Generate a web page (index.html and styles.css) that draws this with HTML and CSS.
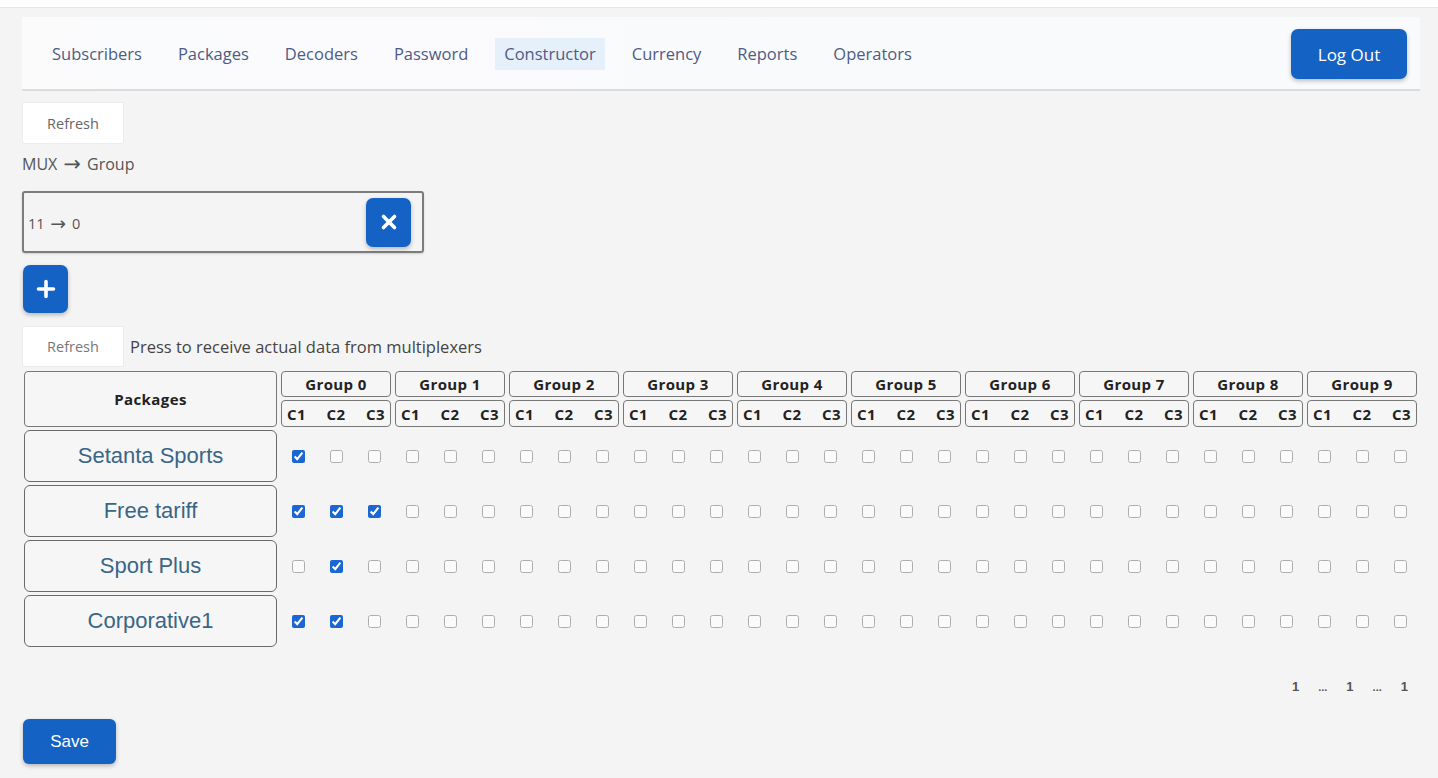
FILE: index.html
```html
<!DOCTYPE html>
<html lang="en">
<head>
<meta charset="utf-8">
<title>Constructor</title>
<link rel="stylesheet" href="styles.css">
</head>
<body>
<div class="topline"></div>
<div class="page">
  <nav class="navbar">
    <ul class="nav-links">
      <li><a class="nav-link" href="#">Subscribers</a></li>
      <li><a class="nav-link" href="#">Packages</a></li>
      <li><a class="nav-link" href="#">Decoders</a></li>
      <li><a class="nav-link" href="#">Password</a></li>
      <li><a class="nav-link active" href="#">Constructor</a></li>
      <li><a class="nav-link" href="#">Currency</a></li>
      <li><a class="nav-link" href="#">Reports</a></li>
      <li><a class="nav-link" href="#">Operators</a></li>
    </ul>
    <button class="btn-primary btn-logout">Log Out</button>
  </nav>

  <section class="mux">
    <button class="btn-light btn-refresh">Refresh</button>
    <div class="mux-title">MUX <span class="arrow">&rarr;</span> Group</div>
    <div class="mux-item">
      <span class="mux-value">11 <span class="arrow">&rarr;</span> 0</span>
      <button class="btn-primary btn-icon" aria-label="Remove">
        <svg width="18" height="18" viewBox="0 0 18 18"><path d="M3.5 3.5 L14.5 14.5 M14.5 3.5 L3.5 14.5" stroke="#fff" stroke-width="3.6" stroke-linecap="round"/></svg>
      </button>
    </div>
    <button class="btn-primary btn-icon btn-add" aria-label="Add">
      <svg width="20" height="20" viewBox="0 0 20 20"><path d="M10 2.5 V17.5 M2.5 10 H17.5" stroke="#fff" stroke-width="3.6" stroke-linecap="round"/></svg>
    </button>
  </section>

  <div class="refresh-row">
    <button class="btn-light btn-refresh small">Refresh</button>
    <span class="hint">Press to receive actual data from multiplexers</span>
  </div>

  <div class="matrix">
    <div class="cell head packages-head">Packages</div>
    <div class="cell head group">Group 0</div>
    <div class="cell head group">Group 1</div>
    <div class="cell head group">Group 2</div>
    <div class="cell head group">Group 3</div>
    <div class="cell head group">Group 4</div>
    <div class="cell head group">Group 5</div>
    <div class="cell head group">Group 6</div>
    <div class="cell head group">Group 7</div>
    <div class="cell head group">Group 8</div>
    <div class="cell head group">Group 9</div>
    <div class="cell head chans"><span>C1</span><span>C2</span><span>C3</span></div>
    <div class="cell head chans"><span>C1</span><span>C2</span><span>C3</span></div>
    <div class="cell head chans"><span>C1</span><span>C2</span><span>C3</span></div>
    <div class="cell head chans"><span>C1</span><span>C2</span><span>C3</span></div>
    <div class="cell head chans"><span>C1</span><span>C2</span><span>C3</span></div>
    <div class="cell head chans"><span>C1</span><span>C2</span><span>C3</span></div>
    <div class="cell head chans"><span>C1</span><span>C2</span><span>C3</span></div>
    <div class="cell head chans"><span>C1</span><span>C2</span><span>C3</span></div>
    <div class="cell head chans"><span>C1</span><span>C2</span><span>C3</span></div>
    <div class="cell head chans"><span>C1</span><span>C2</span><span>C3</span></div>

    <!-- Setanta Sports -->
    <div class="cell package">Setanta Sports</div>
    <div class="checks"><input type="checkbox" checked><input type="checkbox"><input type="checkbox"></div>
    <div class="checks"><input type="checkbox"><input type="checkbox"><input type="checkbox"></div>
    <div class="checks"><input type="checkbox"><input type="checkbox"><input type="checkbox"></div>
    <div class="checks"><input type="checkbox"><input type="checkbox"><input type="checkbox"></div>
    <div class="checks"><input type="checkbox"><input type="checkbox"><input type="checkbox"></div>
    <div class="checks"><input type="checkbox"><input type="checkbox"><input type="checkbox"></div>
    <div class="checks"><input type="checkbox"><input type="checkbox"><input type="checkbox"></div>
    <div class="checks"><input type="checkbox"><input type="checkbox"><input type="checkbox"></div>
    <div class="checks"><input type="checkbox"><input type="checkbox"><input type="checkbox"></div>
    <div class="checks"><input type="checkbox"><input type="checkbox"><input type="checkbox"></div>

    <!-- Free tariff -->
    <div class="cell package">Free tariff</div>
    <div class="checks"><input type="checkbox" checked><input type="checkbox" checked><input type="checkbox" checked></div>
    <div class="checks"><input type="checkbox"><input type="checkbox"><input type="checkbox"></div>
    <div class="checks"><input type="checkbox"><input type="checkbox"><input type="checkbox"></div>
    <div class="checks"><input type="checkbox"><input type="checkbox"><input type="checkbox"></div>
    <div class="checks"><input type="checkbox"><input type="checkbox"><input type="checkbox"></div>
    <div class="checks"><input type="checkbox"><input type="checkbox"><input type="checkbox"></div>
    <div class="checks"><input type="checkbox"><input type="checkbox"><input type="checkbox"></div>
    <div class="checks"><input type="checkbox"><input type="checkbox"><input type="checkbox"></div>
    <div class="checks"><input type="checkbox"><input type="checkbox"><input type="checkbox"></div>
    <div class="checks"><input type="checkbox"><input type="checkbox"><input type="checkbox"></div>

    <!-- Sport Plus -->
    <div class="cell package">Sport Plus</div>
    <div class="checks"><input type="checkbox"><input type="checkbox" checked><input type="checkbox"></div>
    <div class="checks"><input type="checkbox"><input type="checkbox"><input type="checkbox"></div>
    <div class="checks"><input type="checkbox"><input type="checkbox"><input type="checkbox"></div>
    <div class="checks"><input type="checkbox"><input type="checkbox"><input type="checkbox"></div>
    <div class="checks"><input type="checkbox"><input type="checkbox"><input type="checkbox"></div>
    <div class="checks"><input type="checkbox"><input type="checkbox"><input type="checkbox"></div>
    <div class="checks"><input type="checkbox"><input type="checkbox"><input type="checkbox"></div>
    <div class="checks"><input type="checkbox"><input type="checkbox"><input type="checkbox"></div>
    <div class="checks"><input type="checkbox"><input type="checkbox"><input type="checkbox"></div>
    <div class="checks"><input type="checkbox"><input type="checkbox"><input type="checkbox"></div>

    <!-- Corporative1 -->
    <div class="cell package">Corporative1</div>
    <div class="checks"><input type="checkbox" checked><input type="checkbox" checked><input type="checkbox"></div>
    <div class="checks"><input type="checkbox"><input type="checkbox"><input type="checkbox"></div>
    <div class="checks"><input type="checkbox"><input type="checkbox"><input type="checkbox"></div>
    <div class="checks"><input type="checkbox"><input type="checkbox"><input type="checkbox"></div>
    <div class="checks"><input type="checkbox"><input type="checkbox"><input type="checkbox"></div>
    <div class="checks"><input type="checkbox"><input type="checkbox"><input type="checkbox"></div>
    <div class="checks"><input type="checkbox"><input type="checkbox"><input type="checkbox"></div>
    <div class="checks"><input type="checkbox"><input type="checkbox"><input type="checkbox"></div>
    <div class="checks"><input type="checkbox"><input type="checkbox"><input type="checkbox"></div>
    <div class="checks"><input type="checkbox"><input type="checkbox"><input type="checkbox"></div>
  </div>

  <div class="pager">
    <span class="page-num">1</span>
    <span class="page-gap">...</span>
    <span class="page-num">1</span>
    <span class="page-gap">...</span>
    <span class="page-num">1</span>
  </div>

  <button class="btn-primary btn-save">Save</button>
</div>
</body>
</html>
```

FILE: styles.css
```css
* {
  box-sizing: border-box;
}

html, body {
  margin: 0;
  padding: 0;
}

body {
  background: #f4f4f4;
  font-family: "Open Sans", "Noto Sans", sans-serif;
  color: #444;
  min-height: 778px;
}

.topline {
  height: 8px;
  background: #ffffff;
  border-bottom: 1px solid #e6e6e6;
}

.page {
  padding: 9px 18px 0 22px;
}

/* long arrow between MUX and group numbers */
.arrow {
  display: inline-block;
  font-family: "DejaVu Sans", sans-serif;
  font-size: 1.3em;
  line-height: 1;
  margin: 0 2px;
  vertical-align: -1px;
}

/* ---------- navigation ---------- */
.navbar {
  display: flex;
  align-items: center;
  justify-content: space-between;
  height: 74px;
  padding: 2px 13px 0 21px;
  background: linear-gradient(90deg, #fbfbfc, #f8fafc);
  border-bottom: 2px solid #dcdcdc;
}

.nav-links {
  display: flex;
  gap: 18px;
  list-style: none;
  margin: 0;
  padding: 0;
}

.nav-link {
  display: block;
  padding: 6px 9px;
  font-size: 16.5px;
  line-height: 20px;
  color: #4d5b86;
  text-decoration: none;
}

.nav-link.active {
  background: #e6f0fa;
}

.btn-primary {
  border: none;
  background: #1462c4;
  color: #fff;
  border-radius: 7px;
  font-family: "Open Sans", "Noto Sans", sans-serif;
  box-shadow: 0 2px 4px rgba(0, 0, 0, 0.25);
  cursor: pointer;
}

.btn-logout {
  width: 116px;
  height: 50px;
  font-size: 17px;
}

/* ---------- MUX mapping ---------- */
.mux {
  display: flex;
  flex-direction: column;
  align-items: flex-start;
}

.btn-light {
  background: #ffffff;
  border: 1px solid #ececec;
  border-radius: 2px;
  color: #666;
  font-family: "Open Sans", "Noto Sans", sans-serif;
  cursor: pointer;
}

.btn-refresh {
  margin-top: 11px;
  width: 102px;
  height: 42px;
  font-size: 14.5px;
}

.mux-title {
  margin-top: 9px;
  font-size: 16px;
  line-height: 22px;
  color: #555;
}

.mux-item {
  margin-top: 16px;
  width: 402px;
  height: 62px;
  display: flex;
  align-items: center;
  justify-content: space-between;
  padding: 0 11px 0 4px;
  border: 2px solid #7c7c7c;
  border-radius: 3px;
  box-shadow: 0 1px 2px rgba(0, 0, 0, 0.15);
}

.mux-value {
  font-size: 14.5px;
  color: #555;
  padding-top: 3px;
}

.btn-icon {
  width: 45px;
  height: 49px;
  display: flex;
  align-items: center;
  justify-content: center;
  padding: 0;
}

.btn-add {
  margin-top: 12px;
  margin-left: 1px;
  height: 48px;
}

.refresh-row {
  display: flex;
  align-items: center;
  gap: 6px;
  margin-top: 13px;
}

.btn-refresh.small {
  margin-top: 0;
  height: 41px;
  color: #777;
}

.hint {
  font-size: 16.5px;
  color: #444;
}

/* ---------- packages / groups matrix ---------- */
.matrix {
  display: grid;
  grid-template-columns: 253px repeat(10, 110px);
  grid-template-rows: 26px 27px repeat(4, 52px);
  column-gap: 4px;
  row-gap: 3px;
  margin-top: 4px;
  margin-left: 2px;
}

.cell {
  display: flex;
  align-items: center;
  justify-content: center;
  border: 2px solid #6f6f6f;
  border-radius: 5px;
  background: #f6f6f6;
}

.head {
  font-weight: 700;
  font-size: 15px;
  letter-spacing: 0.4px;
  color: #222;
  border-width: 1.5px;
  border-color: #777;
  border-radius: 4px;
}

.packages-head {
  grid-row: span 2;
}

.chans {
  justify-content: space-between;
  padding: 0 5px;
}

.package {
  font-family: "Liberation Sans", Arial, sans-serif;
  font-size: 22px;
  color: #3a6686;
  border-width: 1.5px;
  border-color: #6a6a6a;
  border-radius: 6px;
}

.checks {
  display: flex;
  align-items: center;
  justify-content: space-between;
  padding: 0 10px 0 11px;
}

.checks input {
  width: 13px;
  height: 13px;
  margin: 0;
  accent-color: #1a66d2;
}

.checks input:not(:checked) {
  opacity: 0.55;
}

/* ---------- pager + save ---------- */
.pager {
  display: flex;
  justify-content: flex-end;
  align-items: baseline;
  gap: 19px;
  margin-top: 32px;
  padding-right: 12px;
  font-family: "Liberation Sans", Arial, sans-serif;
  font-size: 13px;
  line-height: 16px;
  color: #555;
}

.page-num {
  font-weight: 700;
}

.page-gap {
  font-size: 11px;
  font-weight: 700;
}

.btn-save {
  margin-top: 24px;
  margin-left: 1px;
  width: 93px;
  height: 45px;
  font-family: "Liberation Sans", Arial, sans-serif;
  font-size: 17px;
  border-radius: 6px;
}
```
